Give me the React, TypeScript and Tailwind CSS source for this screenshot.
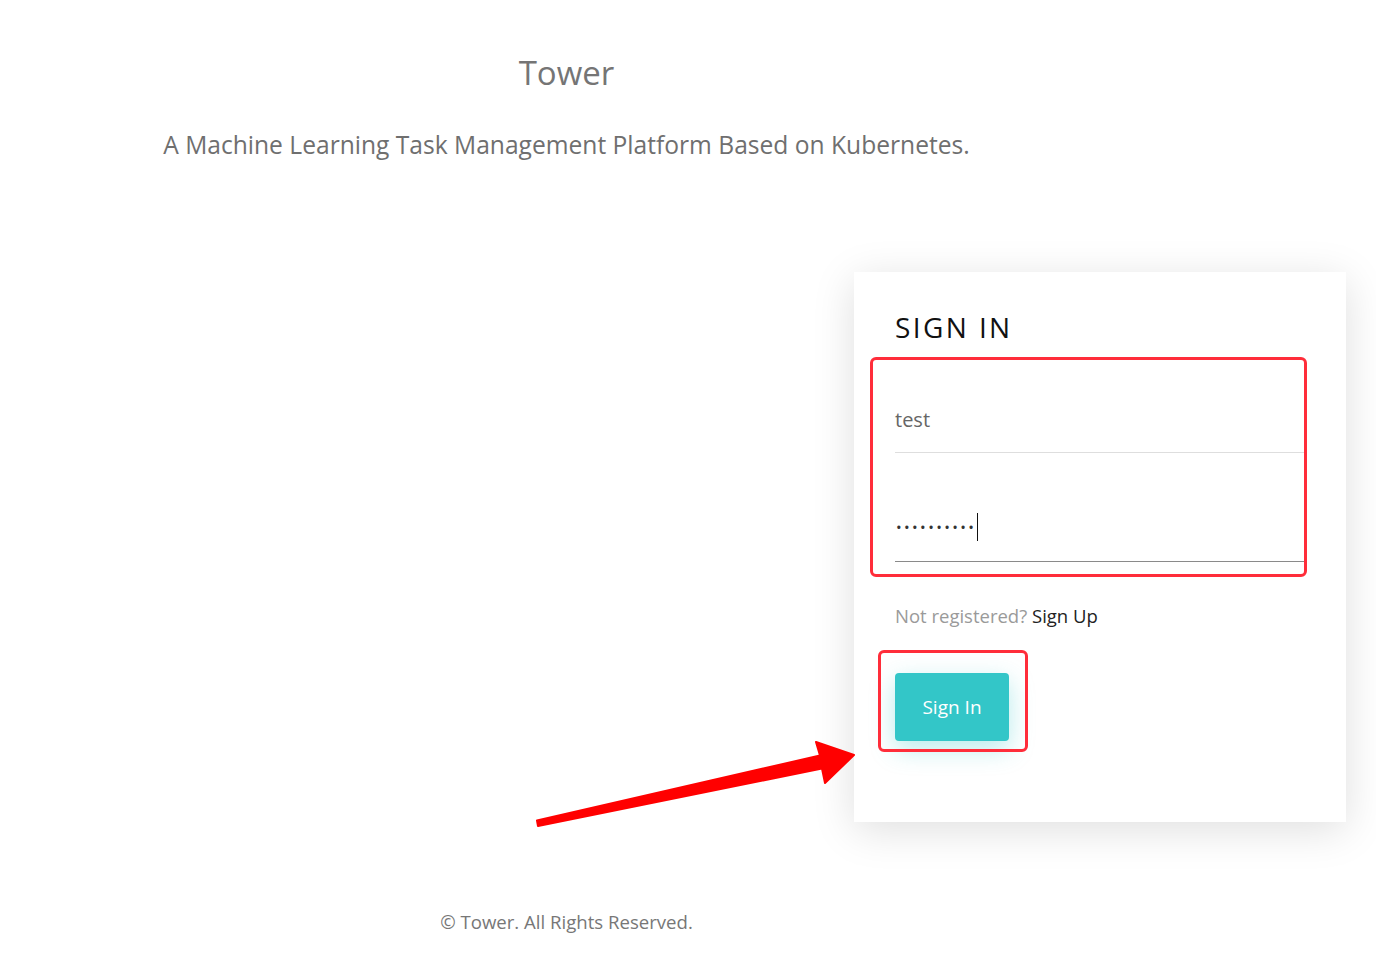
const font = { fontFamily: '"Open Sans", "Noto Sans", sans-serif' }

function Arrow() {
    return (
        <svg className="absolute left-0 top-0 pointer-events-none" width="1376" height="954" viewBox="0 0 1376 954">
            <polygon
                points="537,820.5 820,755.5 816,742 854,755 825,783 822,768.5 538,826"
                fill="#ff0000"
                stroke="#ff0000"
                strokeWidth="2"
                strokeLinejoin="round"
            />
        </svg>
    )
}

export default function App() {
    return (
        <div className="relative min-h-screen w-full bg-white overflow-hidden" style={font}>
            <div className="w-[1133px] pt-[51px] text-center text-[33px] leading-[44px] text-[#757575]">Tower</div>
            <div className="w-[1133px] mt-[34px] text-center text-[24.6px] leading-[32px] text-[#6f6f6f]">
                A Machine Learning Task Management Platform Based on Kubernetes.
            </div>

            <div className="w-[1346px] mt-[111px] flex justify-end">
                <div className="relative w-[492px] h-[550px] bg-white px-[41px] pt-[35px] shadow-[0_8px_40px_rgba(0,0,0,0.13)]">
                    <h2 className="text-[28px] leading-[40px] tracking-[2.4px] text-[#111]">SIGN IN</h2>

                    <div className="mt-[50px] h-[56px] pt-[9px] border-b border-[#dedede]">
                        <span className="text-[20px] leading-[28px] text-[#666]">test</span>
                    </div>

                    <div className="mt-[53px] h-[56px] pt-[7px] border-b border-[#8a8a8a] flex items-start">
                        <span className="ml-[1px] text-[15px] leading-[28px] tracking-[2.4px] text-[#333]">••••••••••</span>
                        <span className="ml-[1px] w-px h-[28px] bg-[#111]" />
                    </div>

                    <p className="mt-[42px] text-[18.5px] leading-[24px] text-[#9a9a9a]">
                        Not registered? <span className="text-[#222]">Sign Up</span>
                    </p>

                    <button className="mt-[45px] w-[114px] h-[68px] rounded-[4px] bg-[#33c6c8] text-white text-[19px] shadow-[0_8px_24px_rgba(51,198,200,0.35)]">
                        Sign In
                    </button>

                    <div className="absolute left-[16px] top-[85px] w-[437px] h-[220px] border-[3px] border-[#ff2d3a] rounded-[6px]" />
                    <div className="absolute left-[24px] top-[378px] w-[150px] h-[102px] border-[3px] border-[#ff2d3a] rounded-[6px]" />
                </div>
            </div>

            <div className="w-[1133px] mt-[88px] text-center text-[18.6px] leading-[24px] text-[#777]">
                © Tower. All Rights Reserved.
            </div>

            <Arrow />
        </div>
    )
}
